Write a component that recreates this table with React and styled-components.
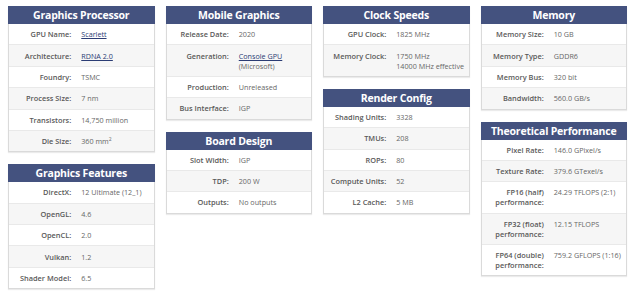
import React from "react";
import styled, { createGlobalStyle } from "styled-components";

const GlobalStyle = createGlobalStyle`
  body {
    margin: 0;
    background: #ffffff;
    font-family: "Open Sans", "Liberation Sans", sans-serif;
  }
`;

const Page = styled.div`
  display: grid;
  grid-template-columns: repeat(4, 146.5px);
  column-gap: 11px;
  align-items: start;
  padding: 6px 8px;
`;

const Column = styled.div`
  display: flex;
  flex-direction: column;
  gap: 12px;
`;

const Section = styled.section`
  background: #ffffff;
  border: 1px solid #dadada;
  border-top: none;
  box-shadow: 0 1px 1px rgba(0, 0, 0, 0.08);
`;

const Title = styled.h2`
  margin: 0 -1px;
  height: 18px;
  background: #44527f;
  color: #ffffff;
  font-family: "Open Sans", sans-serif;
  font-weight: 700;
  font-size: 10.5px;
  line-height: 18px;
  text-align: center;
  letter-spacing: -0.2px;
`;

const Row = styled.div`
  display: grid;
  grid-template-columns: 50% 50%;
  padding: 5.2px 0;
  line-height: 10px;
  font-size: 7.4px;
  background: ${(p) => (p.$odd ? "#f6f6f6" : "#ffffff")};
  border-top: ${(p) => (p.$first ? "none" : "1px solid #e9e9e9")};
`;

const Label = styled.div`
  text-align: right;
  padding-right: 10px;
  font-weight: 600;
  color: #595959;
`;

const Value = styled.div`
  font-size: 7.2px;
  color: #676767;
`;

const Link = styled.a`
  color: #2b3c74;
  text-decoration: underline;
`;

const Sup = styled.span`
  position: relative;
  top: -3px;
  font-size: 5px;
  line-height: 0;
`;

const Sub = styled.div``;

const Block = ({ title, rows }) => (
  <Section>
    <Title>{title}</Title>
    {rows.map(([label, value], i) => (
      <Row key={i} $odd={i % 2 === 1} $first={i === 0}>
        <Label>{label}</Label>
        <Value>{value}</Value>
      </Row>
    ))}
  </Section>
);

const App = () => (
  <>
    <GlobalStyle />
    <Page>
      <Column>
        <Block
          title="Graphics Processor"
          rows={[
            ["GPU Name:", <Link href="#">Scarlett</Link>],
            ["Architecture:", <Link href="#">RDNA 2.0</Link>],
            ["Foundry:", "TSMC"],
            ["Process Size:", "7 nm"],
            ["Transistors:", "14,750 million"],
            ["Die Size:", <>360 mm<Sup>2</Sup></>],
          ]}
        />
        <Block
          title="Graphics Features"
          rows={[
            ["DirectX:", "12 Ultimate (12_1)"],
            ["OpenGL:", "4.6"],
            ["OpenCL:", "2.0"],
            ["Vulkan:", "1.2"],
            ["Shader Model:", "6.5"],
          ]}
        />
      </Column>
      <Column>
        <Block
          title="Mobile Graphics"
          rows={[
            ["Release Date:", "2020"],
            ["Generation:", <><Link href="#">Console GPU</Link><Sub>(Microsoft)</Sub></>],
            ["Production:", "Unreleased"],
            ["Bus Interface:", "IGP"],
          ]}
        />
        <Block
          title="Board Design"
          rows={[
            ["Slot Width:", "IGP"],
            ["TDP:", "200 W"],
            ["Outputs:", "No outputs"],
          ]}
        />
      </Column>
      <Column>
        <Block
          title="Clock Speeds"
          rows={[
            ["GPU Clock:", "1825 MHz"],
            ["Memory Clock:", <>1750 MHz<Sub>14000 MHz effective</Sub></>],
          ]}
        />
        <Block
          title="Render Config"
          rows={[
            ["Shading Units:", "3328"],
            ["TMUs:", "208"],
            ["ROPs:", "80"],
            ["Compute Units:", "52"],
            ["L2 Cache:", "5 MB"],
          ]}
        />
      </Column>
      <Column>
        <Block
          title="Memory"
          rows={[
            ["Memory Size:", "10 GB"],
            ["Memory Type:", "GDDR6"],
            ["Memory Bus:", "320 bit"],
            ["Bandwidth:", "560.0 GB/s"],
          ]}
        />
        <Block
          title="Theoretical Performance"
          rows={[
            ["Pixel Rate:", "146.0 GPixel/s"],
            ["Texture Rate:", "379.6 GTexel/s"],
            [<>FP16 (half)<br />performance:</>, "24.29 TFLOPS (2:1)"],
            [<>FP32 (float)<br />performance:</>, "12.15 TFLOPS"],
            [<>FP64 (double)<br />performance:</>, "759.2 GFLOPS (1:16)"],
          ]}
        />
      </Column>
    </Page>
  </>
);

export default App;
